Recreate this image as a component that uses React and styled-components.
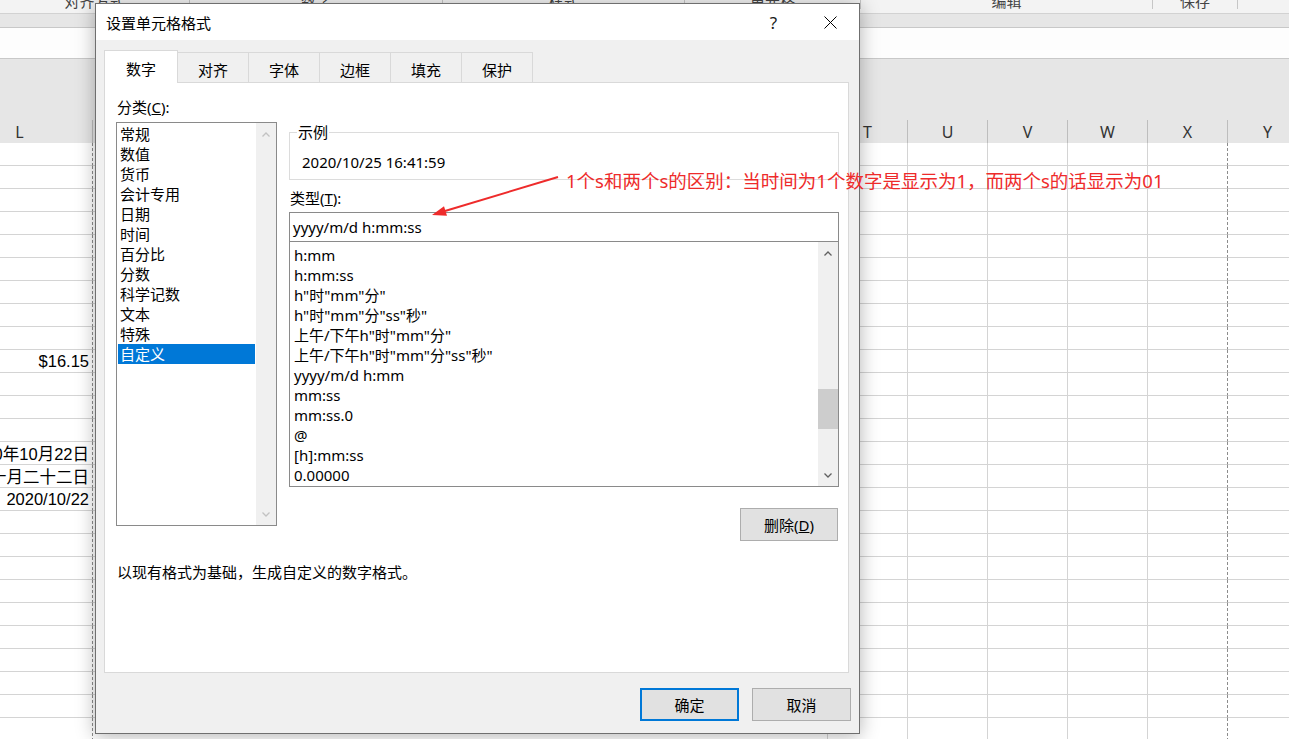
import React from 'react';
import styled, { createGlobalStyle } from 'styled-components';

const GlobalStyle = createGlobalStyle`
  *, *::before, *::after { box-sizing: border-box; }
  html, body { margin: 0; padding: 0; background: #fff; }
  body {
    width: 1289px; height: 739px; overflow: hidden;
    font-family: "Noto Sans", "Noto Sans CJK SC", sans-serif;
  }
`;

const Page = styled.div`
  position: relative;
  width: 1289px;
  height: 739px;
  overflow: hidden;
  background: #fff;
  font-family: "Noto Sans", "Noto Sans CJK SC", sans-serif;
  color: #000;
`;

/* ---------- spreadsheet background ---------- */
const Sheet = styled.div`
  display: flex;
  flex-direction: column;
  height: 100%;
`;

const RibbonStrip = styled.div`
  height: 14px;
  flex: none;
  display: flex;
  align-items: flex-start;
  background: #f3f3f3;
  border-bottom: 1px solid #d2d2d2;
  overflow: hidden;
`;

const RibbonGroup = styled.div`
  width: ${(p) => p.$w}px;
  flex: none;
  height: 9px;
  display: flex;
  justify-content: center;
  border-right: 1px solid #c6c6c6;
`;

const RibbonLabel = styled.span`
  font-size: 15px;
  line-height: 16px;
  margin-top: -7px;
  color: #444;
  white-space: nowrap;
`;

const Band = styled.div`
  height: 14px;
  flex: none;
  background: #e6e6e6;
  border-bottom: 1px solid #c8c8c8;
`;

const FormulaBar = styled.div`
  height: 31px;
  flex: none;
  background: #fdfdfd;
  border-bottom: 1px solid #c8c8c8;
`;

const HeaderGap = styled.div`
  height: 61px;
  flex: none;
  background: #e6e6e6;
`;

const Grid = styled.div`
  margin-left: -53px;
  display: grid;
  grid-template-columns: 146px 735px repeat(6, 80px);
  flex: none;
`;

const ColHead = styled.div`
  height: 23px;
  background: #e6e6e6;
  border-right: 1px solid #bdbdbd;
  display: flex;
  align-items: center;
  justify-content: center;
  font-size: 16px;
  color: #333;
`;

const Cell = styled.div`
  height: 23px;
  border-right: 1px ${(p) => (p.$dashed ? 'dashed #8c8c8c' : 'solid #d4d4d4')};
  border-bottom: 1px solid #d4d4d4;
  display: flex;
  align-items: center;
  justify-content: flex-end;
  padding-right: 3px;
  font-family: "Liberation Sans", "Noto Sans CJK SC", sans-serif;
  font-size: 16.5px;
  white-space: nowrap;
`;

/* ---------- dialog ---------- */
const Dialog = styled.div`
  position: absolute;
  left: 95px;
  top: 3px;
  width: 765px;
  height: 731px;
  border: 1px solid #6f6f6f;
  background: #f0f0f0;
  box-shadow: 0 2px 18px rgba(0, 0, 0, 0.3);
  display: flex;
  flex-direction: column;
`;

const TitleBar = styled.div`
  height: 36px;
  flex: none;
  background: #fff;
  display: flex;
  align-items: center;
  padding-left: 10px;
`;

const Title = styled.span`
  flex: 1;
  font-size: 15px;
`;

const TitleButton = styled.div`
  width: 57px;
  height: 36px;
  display: flex;
  align-items: center;
  justify-content: center;
  font-size: 17px;
  color: #1a1a1a;
`;

const Body = styled.div`
  flex: 1;
  display: flex;
  flex-direction: column;
  padding: 10px 10px 12px 8px;
`;

const TabStrip = styled.div`
  height: 32px;
  flex: none;
  display: flex;
  align-items: flex-end;
  position: relative;
  z-index: 1;
`;

const Tab = styled.div`
  width: ${(p) => (p.$active ? 74 : 72)}px;
  height: ${(p) => (p.$active ? 33 : 30)}px;
  margin-bottom: ${(p) => (p.$active ? -1 : 0)}px;
  margin-left: ${(p) => (p.$first ? 0 : -1)}px;
  border: 1px solid #d9d9d9;
  border-bottom: none;
  background: ${(p) => (p.$active ? '#fff' : '#f0f0f0')};
  display: flex;
  align-items: center;
  justify-content: center;
  padding-top: 3px;
  font-size: 15px;
`;

const Panel = styled.div`
  flex: 1;
  background: #fff;
  border: 1px solid #d9d9d9;
  padding: 14px 9px 0 11px;
  display: grid;
  grid-template-columns: 161px 550px;
  column-gap: 12px;
  align-content: start;
`;

const Column = styled.div`
  display: flex;
  flex-direction: column;
  padding-top: ${(p) => p.$pad || 0}px;
`;

const FieldLabel = styled.div`
  font-size: 15px;
  line-height: 20px;
  height: 20px;
  margin-left: 1px;
  margin-top: ${(p) => p.$mt || 0}px;
  margin-bottom: ${(p) => p.$mb || 0}px;
`;

const ListBox = styled.div`
  height: ${(p) => p.$h}px;
  margin-top: ${(p) => p.$mt || 0}px;
  border: 1px solid #8a8a8a;
  background: #fff;
  display: flex;
`;

const Items = styled.div`
  flex: 1;
  padding-top: ${(p) => p.$pt}px;
  overflow: hidden;
`;

const Item = styled.div`
  height: 20px;
  line-height: 20px;
  font-size: 15px;
  margin: 0 1px;
  padding-left: ${(p) => p.$pl}px;
  white-space: nowrap;
  background: ${(p) => (p.$selected ? '#0078d7' : 'transparent')};
  color: ${(p) => (p.$selected ? '#fff' : '#000')};
`;

const ScrollBar = styled.div`
  width: 20px;
  flex: none;
  background: #f0f0f0;
  display: flex;
  flex-direction: column;
`;

const ArrowBox = styled.div`
  height: 22px;
  flex: none;
  display: flex;
  align-items: center;
  justify-content: center;
`;

const Track = styled.div`
  flex: 1;
  display: flex;
  flex-direction: column;
`;

const Thumb = styled.div`
  margin-top: ${(p) => p.$offset}px;
  height: ${(p) => p.$size}px;
  background: #cdcdcd;
`;

const GroupBox = styled.div`
  position: relative;
  margin-top: 35px;
  height: 48px;
  border: 1px solid #dcdcdc;
  padding: 19px 0 0 12px;
`;

const Legend = styled.span`
  position: absolute;
  top: -11px;
  left: 7px;
  padding: 0 1px;
  background: #fff;
  font-size: 15px;
  line-height: 20px;
`;

const SampleValue = styled.div`
  font-size: 15px;
  line-height: 20px;
`;

const TextInput = styled.div`
  margin-top: 4px;
  height: 30px;
  border: 1px solid #8a8a8a;
  padding-left: 3px;
  display: flex;
  align-items: center;
  font-size: 15px;
`;

const ButtonRow = styled.div`
  display: flex;
  justify-content: flex-end;
  gap: 13px;
  margin-top: ${(p) => p.$mt || 0}px;
  margin-right: ${(p) => p.$mr || 0}px;
`;

const Button = styled.div`
  width: ${(p) => p.$w || 99}px;
  height: 33px;
  background: #e1e1e1;
  border: ${(p) => (p.$primary ? '2px solid #0078d7' : '1px solid #adadad')};
  display: flex;
  align-items: center;
  justify-content: center;
  font-size: 15px;
`;

const Description = styled.div`
  grid-column: 1 / -1;
  margin-top: 21px;
  padding-left: 1px;
  font-size: 15px;
  line-height: 20px;
`;

/* ---------- annotation ---------- */
const Annotation = styled.div`
  position: absolute;
  left: 566px;
  top: 169px;
  color: #ee2b2b;
  font-size: 18.5px;
  line-height: 24px;
  white-space: nowrap;
`;

const ArrowSvg = styled.svg`
  position: absolute;
  left: 425px;
  top: 170px;
`;

/* ---------- icons ---------- */
const Chevron = ({ up, color }) => (
  <svg width="10" height="7" viewBox="0 0 10 7">
    <polyline
      points={up ? '1.5,5.5 5,2 8.5,5.5' : '1.5,1.5 5,5 8.5,1.5'}
      fill="none"
      stroke={color}
      strokeWidth="1.3"
    />
  </svg>
);

const CloseIcon = () => (
  <svg width="13" height="13" viewBox="0 0 13 13">
    <line x1="0.5" y1="0.5" x2="12.5" y2="12.5" stroke="#000" strokeWidth="1" />
    <line x1="12.5" y1="0.5" x2="0.5" y2="12.5" stroke="#000" strokeWidth="1" />
  </svg>
);

const Scroll = ({ enabled, thumb }) => {
  const c = enabled ? '#606060' : '#c2c2c2';
  return (
    <ScrollBar>
      <ArrowBox><Chevron up color={c} /></ArrowBox>
      <Track>{thumb && <Thumb $offset={thumb.offset} $size={thumb.size} />}</Track>
      <ArrowBox><Chevron color={c} /></ArrowBox>
    </ScrollBar>
  );
};

/* ---------- data ---------- */
const ribbonGroups = [
  { label: '对齐方式', w: 190 },
  { label: '数字', w: 253 },
  { label: '样式', w: 242 },
  { label: '单元格', w: 176 },
  { label: '编辑', w: 292 },
  { label: '保存', w: 85 },
];

const columns = ['L', '', 'T', 'U', 'V', 'W', 'X', 'Y'];
const cellText = {
  9: '$16.15',
  13: '2020年10月22日',
  14: '二〇二〇年十月二十二日',
  15: '2020/10/22',
};

const tabs = ['数字', '对齐', '字体', '边框', '填充', '保护'];
const categories = ['常规', '数值', '货币', '会计专用', '日期', '时间', '百分比', '分数', '科学记数', '文本', '特殊', '自定义'];
const formats = [
  'h:mm',
  'h:mm:ss',
  'h"时"mm"分"',
  'h"时"mm"分"ss"秒"',
  '上午/下午h"时"mm"分"',
  '上午/下午h"时"mm"分"ss"秒"',
  'yyyy/m/d h:mm',
  'mm:ss',
  'mm:ss.0',
  '@',
  '[h]:mm:ss',
  '0.00000',
];

export default function App() {
  const rows = Array.from({ length: 26 }, (_, i) => i);
  return (
    <Page>
      <GlobalStyle />
      <Sheet>
        <RibbonStrip>
          {ribbonGroups.map((g) => (
            <RibbonGroup key={g.label} $w={g.w}>
              <RibbonLabel>{g.label}</RibbonLabel>
            </RibbonGroup>
          ))}
        </RibbonStrip>
        <Band />
        <FormulaBar />
        <HeaderGap />
        <Grid>
          {columns.map((c, i) => (
            <ColHead key={'h' + i}>{c}</ColHead>
          ))}
          {rows.map((r) =>
            columns.map((c, i) => (
              <Cell key={r + '-' + i} $dashed={i === 0 || i === 6}>
                {i === 0 ? cellText[r] || '' : ''}
              </Cell>
            ))
          )}
        </Grid>
      </Sheet>

      <Dialog>
        <TitleBar>
          <Title>设置单元格格式</Title>
          <TitleButton>?</TitleButton>
          <TitleButton><CloseIcon /></TitleButton>
        </TitleBar>
        <Body>
          <TabStrip>
            {tabs.map((t, i) => (
              <Tab key={t} $active={i === 0} $first={i === 0}>{t}</Tab>
            ))}
          </TabStrip>
          <Panel>
            <Column>
              <FieldLabel $mb={5}>分类(<u>C</u>):</FieldLabel>
              <ListBox $h={404}>
                <Items $pt={1}>
                  {categories.map((c) => (
                    <Item key={c} $pl={2} $selected={c === '自定义'}>{c}</Item>
                  ))}
                </Items>
                <Scroll enabled={false} />
              </ListBox>
            </Column>
            <Column>
              <GroupBox>
                <Legend>示例</Legend>
                <SampleValue>2020/10/25 16:41:59</SampleValue>
              </GroupBox>
              <FieldLabel $mt={8}>类型(<u>T</u>):</FieldLabel>
              <TextInput>yyyy/m/d h:mm:ss</TextInput>
              <ListBox $h={246} $mt={-1}>
                <Items $pt={3}>
                  {formats.map((f) => (
                    <Item key={f} $pl={3}>{f}</Item>
                  ))}
                </Items>
                <Scroll enabled thumb={{ offset: 125, size: 40 }} />
              </ListBox>
              <ButtonRow $mt={21} $mr={1}>
                <Button $w={98}>删除(<u>D</u>)</Button>
              </ButtonRow>
            </Column>
            <Description>以现有格式为基础，生成自定义的数字格式。</Description>
          </Panel>
          <ButtonRow $mt={15} $mr={-2}>
            <Button $primary>确定</Button>
            <Button>取消</Button>
          </ButtonRow>
        </Body>
      </Dialog>

      <ArrowSvg width="140" height="55" viewBox="0 0 140 55">
        <line x1="133" y1="7" x2="20" y2="41" stroke="#ee2b2b" strokeWidth="2" />
        <polygon points="7,45 22,45.8 19,36.2" fill="#ee2b2b" />
      </ArrowSvg>
      <Annotation>1个s和两个s的区别：当时间为1个数字是显示为1，而两个s的话显示为01</Annotation>
    </Page>
  );
}
